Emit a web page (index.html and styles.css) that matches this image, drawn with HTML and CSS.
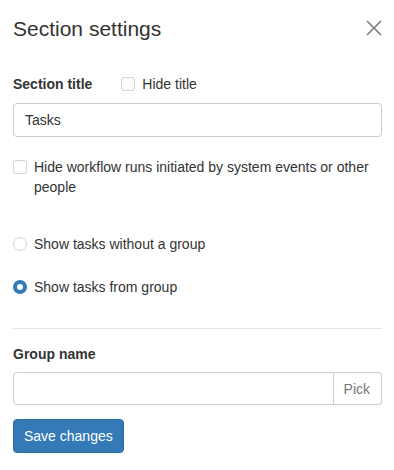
FILE: index.html
```html
<!DOCTYPE html>
<html>
<head>
<meta charset="utf-8">
<link rel="stylesheet" href="styles.css">
</head>
<body>
<div class="panel">
  <div class="header">
    <h4 class="title">Section settings</h4>
    <button class="close" aria-label="Close">
      <svg width="16" height="16" viewBox="0 0 16 16"><path d="M1 1 L15 15 M15 1 L1 15" stroke="#7a7a7a" stroke-width="1.6" fill="none"/></svg>
    </button>
  </div>

  <div class="title-row">
    <label class="field-label">Section title</label>
    <label class="check inline"><input type="checkbox" class="box"><span>Hide title</span></label>
  </div>
  <input class="form-control" type="text" value="Tasks">

  <label class="check multi"><input type="checkbox" class="box"><span>Hide workflow runs initiated by system events or other people</span></label>

  <label class="check radio-one"><input type="radio" name="g" class="radio"><span>Show tasks without a group</span></label>
  <label class="check radio-two"><input type="radio" name="g" class="radio" checked><span>Show tasks from group</span></label>

  <hr class="divider">

  <label class="field-label block">Group name</label>
  <div class="input-group">
    <input class="form-control grow" type="text">
    <span class="addon">Pick</span>
  </div>

  <button class="btn-primary">Save changes</button>
</div>
</body>
</html>
```

FILE: styles.css
```css
* { box-sizing: border-box; }
body {
  margin: 0;
  font-family: "Liberation Sans", Arial, sans-serif;
  font-size: 14px;
  line-height: 20px;
  color: #333;
  background: #fff;
}
.panel {
  padding: 17px 12px 0 13px;
}
.header {
  display: flex;
  justify-content: space-between;
  align-items: flex-start;
}
.title {
  margin: 0;
  font-size: 21px;
  line-height: 24px;
  font-weight: normal;
  color: #333;
}
.close {
  border: 0;
  background: none;
  padding: 0;
  margin: 3px 0 0 0;
  width: 16px;
  height: 16px;
  cursor: pointer;
}
.close svg { display: block; }
.title-row {
  display: flex;
  align-items: center;
  gap: 29px;
  margin-top: 33px;
}
.field-label {
  font-weight: bold;
}
.field-label.block {
  display: block;
  margin-top: 15px;
}
.check {
  display: flex;
  align-items: flex-start;
  gap: 7px;
  cursor: pointer;
}
.check input {
  appearance: none;
  -webkit-appearance: none;
  margin: 3px 0 0 0;
  width: 14px;
  height: 14px;
  flex: none;
  border: 1px solid #d4d4d4;
  background: #fff;
}
.box { border-radius: 3px; }
.radio { border-radius: 50%; }
.radio:checked {
  border: 4px solid #337ab7;
}
.form-control {
  display: block;
  width: 100%;
  height: 34px;
  margin-top: 9px;
  padding: 6px 11px;
  font-family: inherit;
  font-size: 14px;
  color: #333;
  border: 1px solid #ccc;
  border-radius: 4px;
  background: #fff;
  outline: none;
}
.multi { margin-top: 20px; }
.radio-one { margin-top: 37px; }
.radio-two { margin-top: 23px; }
.divider {
  border: 0;
  border-top: 1px solid #e5e5e5;
  margin: 31px 0 0 0;
}
.input-group {
  display: flex;
  margin-top: 8px;
}
.input-group .grow {
  margin-top: 0;
  flex: 1;
  border-radius: 4px 0 0 4px;
  height: 33px;
}
.addon {
  display: flex;
  align-items: center;
  padding: 0 11px 0 10px;
  height: 33px;
  border: 1px solid #ccc;
  border-left: 0;
  border-radius: 0 4px 4px 0;
  color: #777;
  background: #fff;
}
.btn-primary {
  display: block;
  margin-top: 14px;
  height: 34px;
  padding: 6px 10px;
  font-family: inherit;
  font-size: 14px;
  line-height: 20px;
  color: #fff;
  background: #337ab7;
  border: 1px solid #2e6da4;
  border-radius: 4px;
  cursor: pointer;
}
```
